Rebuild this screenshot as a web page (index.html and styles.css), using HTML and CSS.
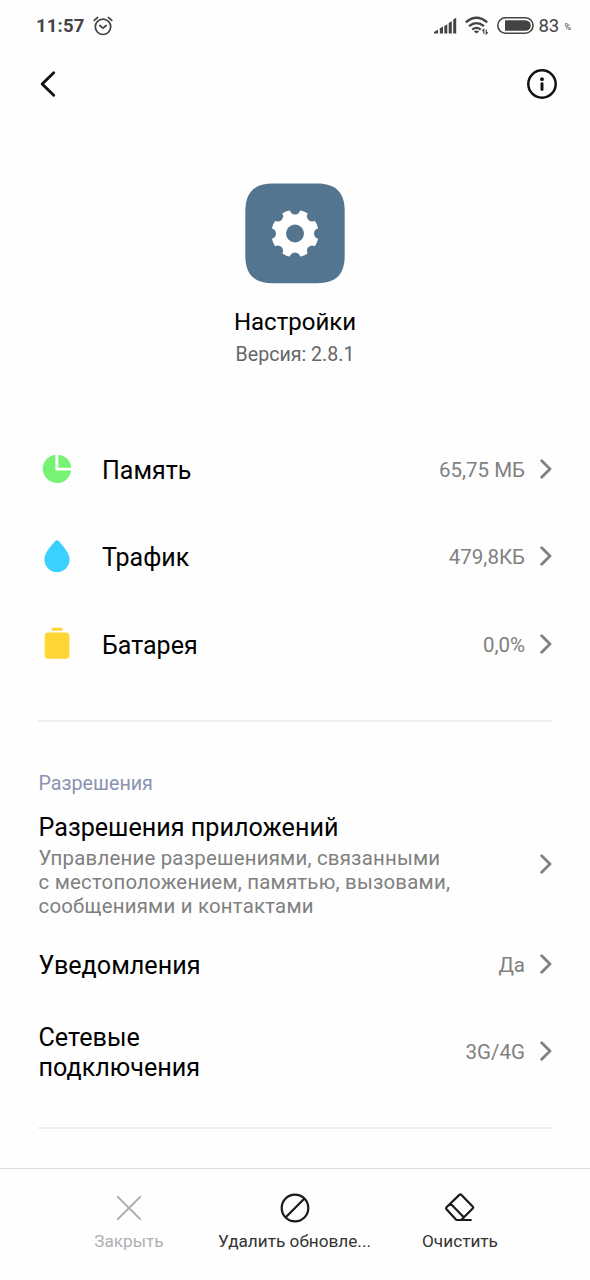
FILE: index.html
```html
<!DOCTYPE html>
<html lang="ru">
<head>
<meta charset="utf-8">
<title>Настройки</title>
<link rel="stylesheet" href="styles.css">
</head>
<body>
<div class="screen">
  <header class="status">
    <span class="clock">11:57</span>
    <svg class="alarm" width="20" height="20" viewBox="0 0 20 20" fill="none" stroke="#444" stroke-width="1.7" stroke-linecap="round" stroke-linejoin="round"><circle cx="10" cy="10.8" r="7.7"/><path d="M6.800 9.500 10 12.200 13.200 9.500M1.200 4.400 4.600 1.500M18.800 4.400 15.400 1.500"/></svg>
    <svg class="signal" width="23" height="17" viewBox="0 0 23 17" fill="#444"><path d="M0 16.500V15l4-2.600v4.100zM5.800 11.200l3.200-1.600v6.900H5.800zM10.300 9l3-1.700v9.200h-3zM14.700 6l3.100-1.700v12.200h-3.100zM19.200 2.400 22.200.8v15.700h-3z"/></svg>
    <svg class="wifi" width="24" height="19" viewBox="0 0 24 19" fill="none" stroke="#444" stroke-width="2.300"><path d="M.8 6.400Q11.500-2.800 22.200 6.400M4 10.200Q11.500 4 19 10.200M7.300 13.600Q11.500 10.200 15.700 13.600"/><path d="M11.500 17.500 8.900 15.500Q11.500 13.600 14.100 15.500z" fill="#444" stroke="none"/><path d="M18.800 18v-4.600l-1.600 1.800M21.200 13.400V18l1.600-1.800" stroke-width="1.100"/></svg>
    <svg class="battery" width="37" height="17" viewBox="0 0 37 17"><rect x=".8" y=".8" width="35.200" height="15.400" rx="7.700" fill="none" stroke="#444" stroke-width="1.600"/><path d="M8 3.200h20.500a5.300 5.300 0 0 1 0 10.600H8z" fill="#444"/></svg>
    <span class="level">83</span><span class="percent">%</span>
  </header>
  <nav class="topbar">
    <svg width="18" height="28" viewBox="0 0 18 28" fill="none" stroke="#111" stroke-width="2.900" stroke-linecap="round" stroke-linejoin="round"><path d="M14.700 2.700 3.200 14 14.700 25.300"/></svg>
    <svg width="30" height="30" viewBox="0 0 30 30"><circle cx="15" cy="15" r="13.700" fill="none" stroke="#111" stroke-width="2.500"/><circle cx="15" cy="10.200" r="1.900" fill="#111"/><path d="M15 14.600v6" stroke="#111" stroke-width="2.900" stroke-linecap="round"/></svg>
  </nav>
  <section class="app">
    <svg width="100" height="101" viewBox="0 0 100 101">
      <path d="M28 .5H72C91 .5 99.700 9.500 99.700 28.500V72.500C99.700 91.500 91 100.200 72 100.200H28C9 100.200.3 91.500.3 72.500V28.500C.3 9.500 9 .5 28 .5Z" fill="#53758f"/>
      <g transform="translate(50 50.500)"><circle r="23.700" fill="#fff"/>
      <g fill="#53758f"><circle r="9"/><circle cy="-24.300" r="5.300"/><circle cy="24.300" r="5.300"/><circle cx="-24.300" r="5.300"/><circle cx="24.300" r="5.300"/><circle cx="17.200" cy="17.200" r="5.300"/><circle cx="-17.200" cy="17.200" r="5.300"/><circle cx="17.200" cy="-17.200" r="5.300"/><circle cx="-17.200" cy="-17.200" r="5.300"/></g></g>
    </svg>
    <h1 class="app-name">Настройки</h1>
    <p class="version">Версия: 2.8.1</p>
  </section>
  <section class="usage">
    <div class="row">
      <svg class="icon" width="38" height="38" viewBox="0 0 38 38" fill="#76f373"><path d="M17.400 4.700A14.200 14.200 0 1 0 33.100 20.500H17.400z"/><path d="M20.300 4.700V17.700H33.200A14.200 14.200 0 0 0 20.300 4.700z"/></svg>
      <span class="title">Память</span><span class="value">65,75 МБ</span><svg class="chev" width="12" height="20" viewBox="0 0 12 20"><path d="M1.700 1.800 10 10 1.700 18.200"/></svg>
    </div>
    <div class="row">
      <svg class="icon" width="38" height="38" viewBox="0 0 38 38" fill="#3cd0ff"><path d="M19 3.200Q20.200 3.200 21.200 4.600C25.500 10 31.600 15.700 31.600 22.500A12.600 12.600 0 0 1 6.400 22.500C6.400 15.700 12.500 10 16.800 4.600Q17.800 3.200 19 3.200z"/></svg>
      <span class="title">Трафик</span><span class="value">479,8КБ</span><svg class="chev" width="12" height="20" viewBox="0 0 12 20"><path d="M1.700 1.800 10 10 1.700 18.200"/></svg>
    </div>
    <div class="row">
      <svg class="icon" width="38" height="38" viewBox="0 0 38 38" fill="#ffd633"><rect x="13.600" y="2.700" width="11" height="3" rx="1"/><rect x="6.700" y="7.500" width="24.700" height="26.300" rx="3.500"/></svg>
      <span class="title">Батарея</span><span class="value">0,0%</span><svg class="chev" width="12" height="20" viewBox="0 0 12 20"><path d="M1.700 1.800 10 10 1.700 18.200"/></svg>
    </div>
  </section>
  <section class="permissions">
    <h2 class="section-title">Разрешения</h2>
    <div class="row row-detailed">
      <div class="texts"><div class="title">Разрешения приложений</div>
      <p class="hint">Управление разрешениями, связанными<br>с местоположением, памятью, вызовами,<br>сообщениями и контактами</p></div>
      <svg class="chev" width="12" height="20" viewBox="0 0 12 20"><path d="M1.700 1.800 10 10 1.700 18.200"/></svg>
    </div>
    <div class="row row-notify">
      <span class="title">Уведомления</span><span class="value">Да</span><svg class="chev" width="12" height="20" viewBox="0 0 12 20"><path d="M1.700 1.800 10 10 1.700 18.200"/></svg>
    </div>
    <div class="row row-network">
      <span class="title">Сетевые<br>подключения</span><span class="value">3G/4G</span><svg class="chev" width="12" height="20" viewBox="0 0 12 20"><path d="M1.700 1.800 10 10 1.700 18.200"/></svg>
    </div>
  </section>
  <footer class="actions">
    <div class="action disabled"><svg width="32" height="32" viewBox="0 0 32 32"><path d="M4.800 4.800 27.200 27.200M27.200 4.800 4.800 27.200"/></svg><span>Закрыть</span></div>
    <div class="action"><svg width="32" height="32" viewBox="0 0 32 32"><circle cx="16" cy="16" r="13.300"/><path d="M6.800 25.200 25.200 6.800"/></svg><span>Удалить обновле...</span></div>
    <div class="action"><svg width="32" height="32" viewBox="0 0 32 32"><path d="M17 2.600 28.900 14.800Q29.500 15.500 28.900 16.200L17.200 28H12.400L2.500 17.300Q1.600 16.300 2.500 15.300L15.600 2.600Q16.300 1.900 17 2.600zM6.400 11.600 20 25.400M12.400 28H26.800"/></svg><span>Очистить</span></div>
  </footer>
</div>
</body>
</html>
```
FILE: styles.css
```css
* { box-sizing: border-box; }
body { margin: 0; background: #fefefe; color: #000; font-family: Roboto, sans-serif; }
h1, h2, p { margin: 0; font-weight: 400; }
svg { display: block; flex: none; }
.screen { width: 590px; height: 1280px; display: flex; flex-direction: column; overflow: hidden; }
.status { height: 51px; display: flex; align-items: center; padding: 0 19px 0 36px; color: #444; }
.clock { font-size: 18.500px; font-weight: 700; letter-spacing: .15px; width: 57px; }
.signal { margin-left: auto; }
.wifi { margin-left: 8px; }
.battery { margin-left: 8px; }
.level { margin-left: 4px; width: 26px; font-size: 18.500px; font-weight: 400; }
.percent { font-size: 9px; line-height: 9px; margin-top: 4px; }
.topbar { height: 66px; display: flex; align-items: center; justify-content: space-between; padding: 0 33px 0 39px; }
.app { height: 308px; padding-top: 66px; display: flex; flex-direction: column; align-items: center; }
.app-name { font-size: 24px; line-height: 30px; margin-top: 23px; }
.version { font-size: 19.600px; line-height: 24px; margin-top: 6px; color: #666; }
.usage { height: 297px; margin: 0 38px; border-bottom: 2px solid #eee; }
.row { display: flex; align-items: center; height: 87.500px; }
.icon { margin-right: 26px; }
.title { font-size: 25px; line-height: 30px; }
.value { margin-left: auto; font-size: 20.500px; line-height: 30px; color: #808080; }
.usage .title { padding-top: 4px; }
.usage .value { padding-top: 2px; }
.chev { margin: 0 0 0 15px; fill: none; stroke: #808080; stroke-width: 2.800; stroke-linecap: round; stroke-linejoin: round; }
.permissions { margin: 0 38px; height: 407px; border-bottom: 2px solid #eee; padding-top: 49px; }
.permissions .title { font-size: 25.150px; padding-left: .5px; }
.section-title { font-size: 19.700px; line-height: 26px; color: #8b93b0; padding-left: .5px; }
.row-detailed { height: 136px; }
.row-detailed .chev { margin-left: auto; margin-top: -3px; }
.hint { font-size: 20.400px; letter-spacing: .22px; line-height: 24px; color: #808080; margin-top: 3px; padding-left: .5px; }
.row-notify { height: 66px; }
.row-notify .title { margin-top: -1px; }
.row-notify .value, .row-network .value { margin-top: -2px; }
.row-notify .chev, .row-network .chev { margin-top: -4px; }
.row-network { height: 108px; }
.actions { margin-top: auto; height: 112px; border-top: 1px solid #ddd; display: grid; grid-template-columns: repeat(3, 165.500px); justify-content: center; padding: 23px 1px 0 0; }
.action { display: flex; flex-direction: column; align-items: center; font-size: 17.200px; line-height: 22px; gap: 6px; color: #333; white-space: nowrap; }
.action svg { fill: none; stroke: #1a1a1a; stroke-width: 2.200; stroke-linecap: round; stroke-linejoin: round; }
.action.disabled { color: #b0b0b0; }
.action.disabled svg { stroke: #aaa; stroke-width: 1.900; }
```
